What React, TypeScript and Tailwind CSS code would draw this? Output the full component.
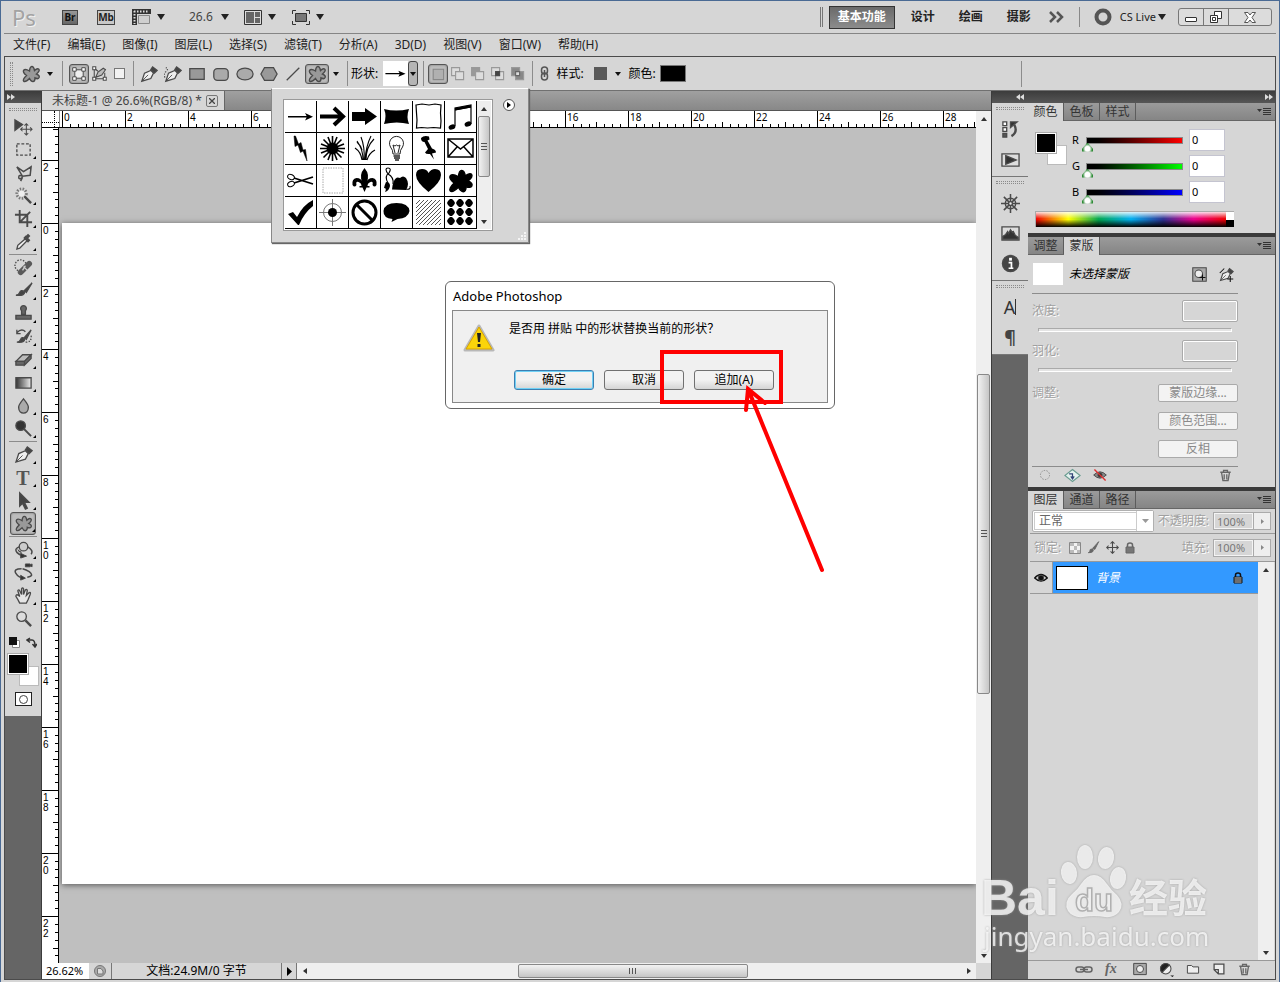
import React, { useState } from 'react';

type IconProps = { children: React.ReactNode; size?: number; className?: string };

// Small line-art icon on a 20x20 grid
function Icon({ children, size = 20, className = '' }: IconProps) {
  return (
    <svg
      width={size}
      height={size}
      viewBox="0 0 20 20"
      fill="none"
      stroke="#4a4a4a"
      strokeWidth="1.4"
      className={`block shrink-0 ${className}`}
      aria-hidden="true"
    >
      {children}
    </svg>
  );
}

function Caret({ className = '' }: { className?: string }) {
  return (
    <svg width="8" height="6" viewBox="0 0 8 6" className={`block shrink-0 ${className}`} aria-hidden="true">
      <path d="M0 0h8L4 6z" fill="#222" />
    </svg>
  );
}

function SmallCaret() {
  return (
    <svg width="6" height="4" viewBox="0 0 6 4" className="block shrink-0" aria-hidden="true">
      <path d="M0 0h6L3 4z" fill="#111" />
    </svg>
  );
}

function Divider({ className = 'w-2' }: { className?: string }) {
  return (
    <div className={`flex shrink-0 justify-center self-stretch py-1 ${className}`}>
      <div className="w-px bg-[#8c8c8c]" />
    </div>
  );
}

function Grip() {
  return <div className="h-[3px] w-7 border-y border-dotted border-[#8a8a8a]" />;
}

const BLOB = 'M8.5 7C9 1 12.5 1 13.5 6.5C17 3 21 5.5 15.5 10C20.5 12 18 16 14 14C14 19 10.5 18.5 8.5 14.5C3 20-.5 17 5.5 11.5C-.5 7 3 3.5 8.5 7Z';

const MENUS = ['文件(F)', '编辑(E)', '图像(I)', '图层(L)', '选择(S)', '滤镜(T)', '分析(A)', '3D(D)', '视图(V)', '窗口(W)', '帮助(H)'];

function TopBar() {
  return (
    <header className="flex h-[33px] shrink-0 items-center border-b border-[#858585]">
      <div className="w-12 pl-2 text-[22px] leading-8 text-[#a3a3a3] [text-shadow:1px_1px_0_#f2f2f2]">Ps</div>
      <button className="flex w-9 justify-center" aria-label="Bridge">
        <span className="h-[15px] w-4 border border-[#444] bg-linear-to-b from-[#999] to-[#666] text-center text-[10px] leading-[13px] font-bold text-[#111]">Br</span>
      </button>
      <button className="flex w-9 justify-center" aria-label="Mini Bridge">
        <span className="h-[15px] w-[18px] border border-[#444] bg-[#c8c8c8] text-center text-[10px] leading-[13px] font-bold text-[#222]">Mb</span>
      </button>
      <button className="flex w-16 items-center gap-1.5 pl-2" aria-label="View extras">
        <svg width="19" height="16" viewBox="0 0 19 16" aria-hidden="true">
          <path d="M0 0h19v5H5v11H0z" fill="#333" />
          <path d="M2 2.5h15M2.5 2v13" stroke="#ddd" strokeWidth="2" strokeDasharray="1.5 1.5" />
          <path d="M6.5 6.5h11v8h-11z" fill="#cfcfcf" stroke="#888" />
        </svg>
        <Caret />
      </button>
      <button className="flex w-14 items-center gap-2 pl-px text-[12px] text-[#444]">
        26.6
        <Caret />
      </button>
      <button className="flex w-12 items-center gap-1.5" aria-label="Arrange documents">
        <svg width="18" height="15" viewBox="0 0 18 15" aria-hidden="true">
          <path d="M.5.5h17v14H.5z" fill="#ddd" stroke="#333" />
          <path d="M2 2h8v11H2zM11 2h5v5h-5zM11 8h5v5h-5z" fill="#666" />
        </svg>
        <Caret />
      </button>
      <button className="flex w-12 items-center gap-1.5" aria-label="Screen mode">
        <svg width="18" height="15" viewBox="0 0 18 15" fill="none" stroke="#333" aria-hidden="true">
          <path d="M.5 4V.5H4M14 .5h3.5V4M17.5 11v3.5H14M4 14.5H.5V11" />
          <path d="M3.5 3.5h11v8h-11z" fill="#777" />
        </svg>
        <Caret />
      </button>

      <div className="ml-auto flex items-center">
        <div className="mr-1.5 h-5 w-[3px] border-x border-[#777]" />
        <button className="mr-4 h-[23px] w-[66px] border border-[#333] bg-linear-to-b from-[#6a6a6a] to-[#8c8c8c] text-[12px] leading-5 font-bold text-white">
          基本功能
        </button>
        <div className="flex gap-6">
          {['设计', '绘画', '摄影'].map((label) => (
            <button key={label} className="w-6 text-[12px] font-bold text-[#222]">
              {label}
            </button>
          ))}
        </div>
        <button className="ml-3 flex w-7 justify-center" aria-label="More workspaces">
          <svg width="15" height="12" viewBox="0 0 15 12" fill="none" stroke="#555" strokeWidth="2.5" aria-hidden="true">
            <path d="M1 1l5 5-5 5M8 1l5 5-5 5" />
          </svg>
        </button>
        <div className="mr-3.5 ml-2 h-5 w-px bg-[#888]" />
        <button className="flex items-center gap-2 text-[11px] text-[#222]">
          <svg width="18" height="18" viewBox="0 0 18 18" aria-hidden="true">
            <circle cx="9" cy="9" r="6.5" fill="none" stroke="#555" strokeWidth="4" />
          </svg>
          CS Live
          <Caret className="-ml-1.5" />
        </button>
        <div className="mr-1 ml-3 flex h-[18px] rounded-[3px] border border-[#777] bg-[#dcdcdc]">
          <button className="flex w-[25px] items-center justify-center border-r border-[#777]" aria-label="Minimize">
            <span className="mt-1 h-[5px] w-3 rounded-[1px] border border-[#333] bg-white" />
          </button>
          <button className="flex w-[25px] items-center justify-center border-r border-[#777]" aria-label="Restore">
            <svg width="12" height="12" viewBox="0 0 12 12" fill="#fff" stroke="#333" aria-hidden="true">
              <path d="M4.5.5h7v7h-7z" />
              <path d="M.5 4.5h7v7h-7z" />
              <path d="M2.5 6.5h3v3h-3z" />
            </svg>
          </button>
          <button className="flex w-[42px] items-center justify-center" aria-label="Close">
            <svg width="12" height="11" viewBox="0 0 12 11" fill="#fff" stroke="#555" aria-hidden="true">
              <path d="M.5.5H4L6 3 8 .5h3.500L8 5.500l3.500 5H8L6 8l-2 2.500H.5L4 5.500z" />
            </svg>
          </button>
        </div>
      </div>
    </header>
  );
}

function Pen() {
  return (
    <>
      <path d="M2 18L5 9L12 6L15 9L12 15Z" fill="#eee" />
      <path d="M2 18L9 11" strokeWidth="1" />
      <path d="M12 5L14 2L19 6L16 9Z" fill="#444" />
    </>
  );
}

function PathOps({ mode }: { mode: number }) {
  const fills = ['#aaa', '#ddd', '#ddd', '#ddd', '#888'];
  return (
    <Icon size={16}>
      {mode === 0 ? (
        <path d="M4 4h13v13H4z" fill="#b0b0b0" stroke="#888" />
      ) : (
        <>
          <path d="M2 2h10v10H2z" fill={mode === 2 ? '#999' : fills[mode]} stroke="#999" />
          <path d="M7 7h10v10H7z" fill={fills[mode]} stroke="#999" />
          {mode === 3 && <path d="M7 7h5v5H7z" fill="#444" />}
          {mode === 4 && <path d="M7 7h5v5H7z" fill="#ddd" stroke="#666" />}
        </>
      )}
    </Icon>
  );
}

const DRAW_TOOLS: { name: string; art: React.ReactNode }[] = [
  { name: 'Pen', art: <Pen /> },
  {
    name: 'Freeform pen',
    art: (
      <>
        <Pen />
        <path d="M1 14Q-1 9 3 7Q5 4 2 3" strokeDasharray="1.5 1.5" />
      </>
    ),
  },
  { name: 'Rectangle', art: <path d="M2 4h16v12H2z" fill="#999" /> },
  { name: 'Rounded rectangle', art: <rect x="2" y="4" width="16" height="13" rx="4" fill="#aaa" /> },
  { name: 'Ellipse', art: <ellipse cx="10" cy="10" rx="9" ry="6.5" fill="#aaa" /> },
  { name: 'Polygon', art: <path d="M1 10L5 3h10l4 7-4 7H5z" fill="#999" /> },
  { name: 'Line', art: <path d="M3 17L17 3" /> },
];

const pressed = 'rounded-[3px] border border-[#555] bg-[#bcbcbc] shadow-[inset_0_0_2px_#666]';

function OptionsBar() {
  return (
    <div className="flex h-[34px] shrink-0 items-center border-b border-[#707070] text-[12px] text-black">
      <div className="flex w-3 justify-center">
        <div className="h-6 w-[3px] border-x border-dotted border-[#8a8a8a]" />
      </div>
      <div className="flex w-7 justify-center">
        <Icon><path d={BLOB} fill="#999" /></Icon>
      </div>
      <div className="flex w-2.5 justify-center"><SmallCaret /></div>
      <Divider className="w-3.5" />
      <button className={`flex h-5 w-5 items-center justify-center ${pressed}`} aria-label="Shape layers">
        <Icon size={14}>
          <path d="M4 4h12v12H4z" fill="#eee" />
          <path d="M1 1h5v5H1zM14 1h5v5h-5zM1 14h5v5H1zM14 14h5v5h-5z" fill="#fff" />
        </Icon>
      </button>
      <button className="flex w-5 justify-center" aria-label="Paths">
        <Icon size={15}>
          <path d="M3 3v14h14M3 3l5 4M17 17V9" />
          <path d="M5 15L8 8L15 3L18 5L13 12Z" fill="#bbb" />
          <path d="M1 1h4v4H1zM1 15h4v4H1zM15 15h4v4h-4z" fill="#fff" />
        </Icon>
      </button>
      <button className="flex w-5 justify-center" aria-label="Fill pixels">
        <span className="h-[11px] w-[11px] border border-[#777] bg-[#f2f2f2]" />
      </button>
      <Divider />
      {DRAW_TOOLS.map((tool) => (
        <button key={tool.name} className="flex w-6 justify-center" aria-label={tool.name}>
          <Icon size={18}>{tool.art}</Icon>
        </button>
      ))}
      <button className={`flex h-5 w-6 items-center justify-center ${pressed}`} aria-label="Custom shape">
        <Icon><path d={BLOB} fill="#999" /></Icon>
      </button>
      <div className="flex w-3.5 justify-center"><SmallCaret /></div>
      <Divider />
      <span className="w-8">形状:</span>
      <button className="flex h-[25px] w-[25px] items-center bg-white" aria-label="Current shape">
        <svg width="25" height="25" viewBox="0 0 31 31" aria-hidden="true">
          <path d="M3 15h20v1.500H3zM19 12l9 3.700-9 3.700 2-3.700z" />
        </svg>
      </button>
      <button className="flex h-[25px] w-2.5 items-center justify-center rounded-[3px] border border-[#444] bg-[#b5b5b5]" aria-label="Choose shape">
        <SmallCaret />
      </button>
      <Divider className="w-2.5" />
      {['New', 'Add', 'Subtract', 'Intersect', 'Exclude'].map((name, i) => (
        <button
          key={name}
          aria-label={name}
          className={`flex h-5 w-5 items-center justify-center ${i === 0 ? pressed : ''}`}
        >
          <PathOps mode={i} />
        </button>
      ))}
      <Divider />
      <button className="flex w-4 justify-center" aria-label="Link style">
        <svg width="9" height="15" viewBox="0 0 9 15" fill="none" stroke="#555" strokeWidth="1.5" aria-hidden="true">
          <rect x="1.5" y="1" width="6" height="7" rx="3" />
          <rect x="1.5" y="7" width="6" height="7" rx="3" />
          <path d="M4.5 4v7" />
        </svg>
      </button>
      <span className="w-9 text-center">样式:</span>
      <div className="flex w-6 justify-center"><span className="h-[13px] w-[13px] bg-[#595959]" /></div>
      <div className="flex w-3 justify-center"><SmallCaret /></div>
      <span className="w-9 text-center">颜色:</span>
      <button className="h-[17px] w-[26px] border border-[#777] bg-black" aria-label="Shape colour" />
      <div className="mr-[253px] ml-auto h-[26px] w-px bg-[#8c8c8c]" />
    </div>
  );
}

const TOOL_GROUPS: { name: string; art: React.ReactNode }[][] = [
  [
    {
      name: 'Move',
      art: (
        <>
          <path d="M1 3v11l8-6z" fill="#444" />
          <path d="M13 7v12M7 13h12M11 9l2-2 2 2M11 17l2 2 2-2M9 11l-2 2 2 2M17 11l2 2-2 2" strokeWidth="1.1" />
        </>
      ),
    },
    { name: 'Marquee', art: <path d="M3 4h14v12H3z" strokeDasharray="3 1.8" /> },
    { name: 'Lasso', art: <path d="M3 4l7 5 8-5-1 9-8 1-6-10M9 14q-4-2-4 1t4 0l-2 4" strokeWidth="1.600" /> },
    {
      name: 'Magic wand',
      art: (
        <>
          <circle cx="8" cy="8" r="5" stroke="#777" strokeWidth="3" strokeDasharray="1.5 1.5" />
          <circle cx="8" cy="8" r="3" fill="#eee" stroke="none" />
          <path d="M11 11l7 7" strokeWidth="2.5" />
        </>
      ),
    },
    { name: 'Crop', art: <path d="M6 1v13h13M1 6h13v13M6 14L17 3" strokeWidth="2" /> },
    {
      name: 'Eyedropper',
      art: (
        <>
          <path d="M3 18l1-4 8-7 2 2-8 8z" fill="#eee" />
          <path d="M11 5l5 5M13 6l3-3" strokeWidth="3.5" />
        </>
      ),
    },
  ],
  [
    {
      name: 'Healing brush',
      art: (
        <>
          <circle cx="7" cy="8" r="6" strokeDasharray="1.5 1.5" />
          <path d="M7 15L16 6" strokeWidth="6" strokeLinecap="round" stroke="#5a5a5a" />
          <path d="M10 9l4 4M12 8l-3 5" stroke="#ccc" />
        </>
      ),
    },
    { name: 'Brush', art: <path d="M2 15q3 0 4-3t5-1q1 5-9 4zM11 10l8-8-6 10z" fill="#444" /> },
    { name: 'Clone stamp', art: <path d="M2 12h16v4H2zM8 11V7a3 3 0 1 1 4 0v4z" fill="#666" /> },
    {
      name: 'History brush',
      art: (
        <>
          <path d="M3 16q3 0 4-3t4-1q1 5-8 4zM11 11l7-8-5 10z" fill="#444" />
          <path d="M3 6q5-5 9-1M3 3v4h4" />
          <path d="M18 9q1 7-6 7" strokeDasharray="1.5 1.5" />
        </>
      ),
    },
    {
      name: 'Eraser',
      art: (
        <>
          <path d="M2 12L9 5h9l-7 7z" fill="#bbb" />
          <path d="M2 12h9v4H2zM11 12l7-7v4l-7 7z" fill="#666" />
        </>
      ),
    },
    {
      name: 'Gradient',
      art: (
        <>
          <defs>
            <linearGradient id="tool-gradient">
              <stop stopColor="#333" />
              <stop offset="1" stopColor="#eee" />
            </linearGradient>
          </defs>
          <path d="M2 5h16v11H2z" fill="url(#tool-gradient)" />
        </>
      ),
    },
    { name: 'Blur', art: <path d="M10 3q6 7 5 10a5 5 0 0 1-10 0q-1-3 5-10z" fill="#aaa" /> },
    {
      name: 'Dodge',
      art: (
        <>
          <circle cx="7" cy="7" r="5" fill="#333" />
          <path d="M10 10l8 8" strokeWidth="2" />
        </>
      ),
    },
  ],
  [
    { name: 'Pen tool', art: <Pen /> },
    { name: 'Type', art: null },
    { name: 'Path selection', art: <path d="M6 2v14l3-3 3 6 2-1-3-6h5z" fill="#444" /> },
    { name: 'Custom shape tool', art: <path d={BLOB} fill="#999" /> },
  ],
  [
    {
      name: '3D rotate',
      art: (
        <>
          <path d="M6 7Q0 9 3 13q4 4 10 4M14 7q7 4 4 8" strokeWidth="1.600" />
          <circle cx="10" cy="7" r="4.5" fill="#ccc" />
          <path d="M8 13q-3 0-4-3M7 14l6 3-6 2z" fill="#333" strokeWidth="1" />
        </>
      ),
    },
    {
      name: '3D camera',
      art: (
        <>
          <path d="M8 6Q-1 6 2 11t9 5M14 15q8-1 2-6-3-2-7-3" strokeWidth="1.600" />
          <path d="M12 1h5v3h-5zM17 2l2-1v3l-2-1M7 13l5 3-5 2z" fill="#333" strokeWidth="1" />
        </>
      ),
    },
    {
      name: 'Hand',
      art: <path d="M6 18Q4 14 2 11q0-3 3-1l1 1L4 5q1-2 2 0l2 4V3q1-2 2 0v6l2-5q2-1 2 1l-1 5 3-3q2-1 1 2l-2 5-2 4z" fill="#e5e5e5" />,
    },
    {
      name: 'Zoom',
      art: (
        <>
          <circle cx="8" cy="8" r="5" fill="#ddd" />
          <path d="M12 12l6 6" strokeWidth="2.5" />
        </>
      ),
    },
  ],
];

function Toolbar() {
  return (
    <aside className="w-[37px] shrink-0 border-r border-[#3c3c3c] bg-[#656565]">
      <div className="flex h-3 items-center bg-linear-to-b from-[#3c3c3c] to-[#565656] pl-0.5">
        <Chevrons direction="right" />
      </div>
      <div className="flex flex-col items-center bg-[#d6d6d6] pb-2.5">
        <div className="flex h-3 items-center"><Grip /></div>
        {TOOL_GROUPS.map((group, i) => (
          <React.Fragment key={i}>
            {i > 0 && <div className="my-px h-px w-7 bg-[#8c8c8c]" />}
            {group.map((tool) => {
              const active = tool.name === 'Custom shape tool';
              return (
                <button
                  key={tool.name}
                  aria-label={tool.name}
                  className={`relative flex h-[23px] w-[26px] items-center justify-center ${active ? pressed : ''}`}
                >
                  {tool.art ? (
                    <Icon size={19}>{tool.art}</Icon>
                  ) : (
                    <span className="font-['Liberation_Serif',serif] text-[20px] leading-5 font-bold text-[#555]">T</span>
                  )}
                  {tool.name !== 'Move' && tool.name !== 'Zoom' && (
                    <span className="absolute right-0 bottom-0.5 h-[3px] w-[3px] bg-black [clip-path:polygon(100%_0,100%_100%,0_100%)]" />
                  )}
                </button>
              );
            })}
          </React.Fragment>
        ))}
        <div className="flex h-6 w-7 items-center justify-between">
          <svg width="11" height="11" viewBox="0 0 11 11" aria-hidden="true">
            <path d="M3.5 3.5h7v7h-7z" fill="#fff" stroke="#888" />
            <path d="M0 0h8v8H0z" fill="#111" />
          </svg>
          <svg width="11" height="11" viewBox="0 0 11 11" fill="none" stroke="#333" strokeWidth="1.5" aria-hidden="true">
            <path d="M4 1L1 3l3 2.500M1 3h5q3 0 3 6M6.500 7L9 10l2-3" />
          </svg>
        </div>
        <Swatches />
        <button className="mt-1.5 flex h-[14px] w-[17px] items-center justify-center border border-[#222] bg-white" aria-label="Quick mask">
          <span className="h-[9px] w-[9px] rounded-full border border-[#444]" />
        </button>
      </div>
    </aside>
  );
}

function Swatches() {
  return (
    <div className="relative h-8 w-[31px]">
      <button className="absolute right-0 bottom-0 h-5 w-5 border border-[#bbb] bg-white" aria-label="Background colour" />
      <button className="absolute top-0 left-0 h-5 w-5 border border-white bg-black outline outline-[#aaa]" aria-label="Foreground colour" />
    </div>
  );
}

function Chevrons({ direction }: { direction: 'left' | 'right' }) {
  return (
    <svg width="8" height="6" viewBox="0 0 8 6" fill="#ddd" className={direction === 'left' ? 'rotate-180' : ''} aria-hidden="true">
      <path d="M0 0l4 3-4 3zM4 0l4 3-4 3z" />
    </svg>
  );
}

function HorizontalRuler() {
  const unit = 62.9;
  return (
    <svg className="block h-full w-full" fontSize="10" aria-hidden="true">
      {Array.from({ length: 15 }, (_, major) => (
        <g key={major} transform={`translate(${Math.round(2 + major * unit)} 0)`} stroke="#000">
          <path d="M.5 0v17" />
          {[1, 2, 3, 4, 5, 6, 7].map((t) => (
            <path key={t} d={`M${Math.round((t * unit) / 8) + 0.5} ${t === 4 ? 11 : 13}v6`} />
          ))}
          <text x="2" y="10" stroke="none">{major * 2}</text>
        </g>
      ))}
    </svg>
  );
}

function VerticalRuler() {
  const labels = ['', '2', '0', '2', '4', '6', '8', '10', '12', '14', '16', '18', '20', '22'];
  return (
    <svg className="block h-full w-full font-['Liberation_Sans',sans-serif]" fontSize="10" aria-hidden="true">
      {labels.map((label, i) => (
        <g key={i} transform={`translate(0 ${i * 63 - 31})`} stroke="#000">
          <path d="M0 .5h17" />
          {[1, 2, 3, 4, 5, 6, 7].map((t) => (
            <path key={t} d={`M${t === 4 ? 11 : 13} ${Math.round((t * 63) / 8) + 0.5}h6`} />
          ))}
          {label.split('').map((digit, d) => (
            <text key={d} x="1" y={11 + d * 10} stroke="none">{digit}</text>
          ))}
        </g>
      ))}
    </svg>
  );
}

function ScrollArrow({ rotate = '' }: { rotate?: string }) {
  return (
    <span className="flex h-[15px] w-[15px] shrink-0 items-center justify-center">
      <svg width="6" height="4" viewBox="0 0 6 4" className={rotate} aria-hidden="true">
        <path d="M0 4L3 0l3 4z" fill="#333" />
      </svg>
    </span>
  );
}

function DocumentArea() {
  return (
    <main className="flex min-w-0 flex-1 flex-col bg-[#bfbfbf]">
      <div className="flex h-5 shrink-0 items-end border-b border-[#555] bg-linear-to-b from-[#a0a0a0] to-[#888]">
        <div className="flex h-[19px] items-center gap-1 border-r border-[#666] bg-[#d6d6d6] pr-1.5 pl-2.5 text-[12px] whitespace-nowrap text-[#444]">
          未标题-1 @ 26.6%(RGB/8) *
          <button className="flex h-3 w-3 items-center justify-center rounded-[2px] border border-[#777]" aria-label="Close document">
            <svg width="6" height="6" viewBox="0 0 6 6" stroke="#444" strokeWidth="1.300" aria-hidden="true">
              <path d="M0 0l6 6M6 0L0 6" />
            </svg>
          </button>
        </div>
      </div>
      <div className="flex min-h-0 flex-1">
        <div className="flex min-w-0 flex-1 flex-col">
          <div className="flex h-[17px] shrink-0 border-b border-black bg-white">
            <div className="relative w-[18px] shrink-0 border-r border-[#888]">
              <div className="absolute top-0 right-1 h-full border-r border-dotted border-black" />
              <div className="absolute bottom-1 left-0 w-full border-b border-dotted border-black" />
            </div>
            <div className="min-w-0 flex-1 overflow-hidden"><HorizontalRuler /></div>
          </div>
          <div className="flex min-h-0 flex-1">
            <div className="w-[17px] shrink-0 overflow-hidden border-r border-black bg-white"><VerticalRuler /></div>
            <div className="min-w-0 flex-1 overflow-hidden pt-[95px] pb-[79px] pl-[3px]">
              <div className="h-full bg-white shadow-[0_1px_6px_#555]" />
            </div>
          </div>
        </div>
        <div className="flex w-[15px] shrink-0 flex-col bg-[#efefef]">
          <ScrollArrow />
          <div className="grow-[248] basis-0" />
          <div className="mx-px flex grow-[318] basis-0 items-center justify-center rounded-[2px] border border-[#888] bg-linear-to-r from-[#f2f2f2] to-[#c6c6c6]">
            <span className="h-2 w-1.5 bg-[repeating-linear-gradient(#555_0_1px,transparent_1px_3px)]" />
          </div>
          <div className="grow-[254] basis-0" />
          <ScrollArrow rotate="rotate-180" />
        </div>
      </div>
      <div className="flex h-4 shrink-0 bg-[#d6d6d6] text-[11px] leading-4 text-black">
        <div className="w-[47px] bg-white pl-1">26.62%</div>
        <div className="flex w-[23px] items-center justify-center border-r border-[#777]">
          <svg width="12" height="12" viewBox="0 0 12 12" fill="none" stroke="#777" aria-hidden="true">
            <circle cx="6" cy="6" r="5.500" fill="#aaa" />
            <path d="M3.500 3.500H7l2 2.500v3H3.500z" fill="#ddd" />
          </svg>
        </div>
        <div className="w-[170px] border-r border-[#777] text-center text-[12px]">文档:24.9M/0 字节</div>
        <div className="flex w-[15px] items-center justify-center border-r border-[#777]">
          <svg width="5" height="9" viewBox="0 0 5 9" aria-hidden="true"><path d="M0 0l5 4.500L0 9z" /></svg>
        </div>
        <div className="flex flex-1 bg-[#efefef]">
          <ScrollArrow rotate="-rotate-90" />
          <div className="grow-[207] basis-0" />
          <div className="my-px flex grow-[228] basis-0 items-center justify-center rounded-[2px] border border-[#888] bg-linear-to-b from-[#f2f2f2] to-[#c6c6c6]">
            <span className="h-1.5 w-2 bg-[repeating-linear-gradient(90deg,#555_0_1px,transparent_1px_3px)]" />
          </div>
          <div className="grow-[214] basis-0" />
          <ScrollArrow rotate="rotate-90" />
        </div>
        <div className="w-[15px]" />
      </div>
    </main>
  );
}

const DOCK_GROUPS: { name: string; art: React.ReactNode }[][] = [
  [
    {
      name: 'History',
      art: (
        <>
          <path d="M2 2h4v4H2zM2 8h4v4H2z" fill="#fff" />
          <path d="M2 14h4v4H2z" fill="#555" />
          <path d="M11 17q7-4 3-12" strokeWidth="2.500" />
          <path d="M10 8V2h7z" fill="#333" />
        </>
      ),
    },
    {
      name: 'Actions',
      art: (
        <>
          <path d="M1 4h18v13H1z" fill="#ddd" />
          <path d="M5 6l11 4.500L5 15z" fill="#333" />
        </>
      ),
    },
  ],
  [
    {
      name: 'Navigator',
      art: (
        <>
          <circle cx="10" cy="10" r="5.500" />
          <path d="M10 0v20M0 10h20M3 3l14 14M17 3L3 17" strokeWidth="1.600" />
          <circle cx="10" cy="10" r="2" fill="#eee" />
        </>
      ),
    },
    {
      name: 'Histogram',
      art: (
        <>
          <path d="M1 3h18v14H1z" fill="#ddd" />
          <path d="M2 16v-3l3-2 2-3 1 2 2-4 2 3 1-1 2 4 3 2v2z" fill="#333" />
        </>
      ),
    },
    {
      name: 'Info',
      art: (
        <>
          <circle cx="10" cy="10" r="8.500" fill="#444" />
          <path d="M10 4v3" stroke="#fff" strokeWidth="3" />
          <path d="M8 9h3v6M8 15h5" stroke="#fff" strokeWidth="1.800" />
        </>
      ),
    },
  ],
  [
    { name: 'Character', art: null },
    { name: 'Paragraph', art: null },
  ],
];

function IconDock() {
  return (
    <div className="w-9 shrink-0 bg-[#656565]">
      {DOCK_GROUPS.map((group, i) => (
        <div key={i} className="flex flex-col items-center border-b border-[#777] bg-[#d6d6d6] pb-0.5">
          <div className="flex h-[11px] items-center"><Grip /></div>
          {group.map((item) => (
            <button key={item.name} aria-label={item.name} className="flex h-[30px] items-center justify-center">
              {item.art ? (
                <Icon size={19}>{item.art}</Icon>
              ) : item.name === 'Character' ? (
                <span className="border-r border-[#333] text-[18px] leading-4 text-[#333]">A</span>
              ) : (
                <span className="text-[18px] leading-4 font-bold text-[#444]">¶</span>
              )}
            </button>
          ))}
        </div>
      ))}
    </div>
  );
}

function TabStrip({ tabs, active }: { tabs: string[]; active: string }) {
  return (
    <div role="tablist" className="flex h-[18px] shrink-0 items-stretch border-b border-[#666] bg-linear-to-b from-[#9b9b9b] to-[#858585]">
      {tabs.map((tab) => (
        <button
          key={tab}
          role="tab"
          aria-selected={tab === active}
          className={`w-9 border-r border-[#5c5c5c] text-[12px] leading-4 ${
            tab === active ? '-mb-px bg-[#d6d6d6] text-[#333]' : 'text-[#333]'
          }`}
        >
          {tab}
        </button>
      ))}
      <button className="mr-1 ml-auto" aria-label="Panel menu">
        <svg width="14" height="8" viewBox="0 0 14 8" aria-hidden="true">
          <path d="M0 1h5L2.500 4z" fill="#333" />
          <path d="M6 .5h8M6 2.500h8M6 4.500h8M6 6.500h8" stroke="#333" />
        </svg>
      </button>
    </div>
  );
}

const CHANNELS = [
  { name: 'R', track: '[&::-webkit-slider-runnable-track]:to-[#f00]' },
  { name: 'G', track: '[&::-webkit-slider-runnable-track]:to-[#0f0]' },
  { name: 'B', track: '[&::-webkit-slider-runnable-track]:to-[#00f]' },
];

function ColorPanel() {
  const [values, setValues] = useState<Record<string, number>>({ R: 0, G: 0, B: 0 });
  return (
    <section className="border-b-4 border-[#3a3a3a] bg-[#d6d6d6]">
      <TabStrip tabs={['颜色', '色板', '样式']} active="颜色" />
      <div className="flex pt-1.5 pl-2">
        <div className="w-9 pt-1.5"><Swatches /></div>
        <div>
          {CHANNELS.map(({ name, track }) => (
            <div key={name} className="flex h-[26px] items-center text-[11px]">
              <label htmlFor={`slider-${name}`} className="w-[14px]">{name}</label>
              <input
                id={`slider-${name}`}
                type="range"
                max={255}
                value={values[name]}
                onChange={(e) => setValues({ ...values, [name]: Number(e.target.value) })}
                className={`h-4 w-[97px] appearance-none [&::-webkit-slider-runnable-track]:h-[7px] [&::-webkit-slider-runnable-track]:border [&::-webkit-slider-runnable-track]:border-[#888] [&::-webkit-slider-runnable-track]:bg-linear-to-r [&::-webkit-slider-runnable-track]:from-black [&::-webkit-slider-thumb]:mt-[5px] [&::-webkit-slider-thumb]:-ml-[5px] [&::-webkit-slider-thumb]:h-[9px] [&::-webkit-slider-thumb]:w-[11px] [&::-webkit-slider-thumb]:appearance-none [&::-webkit-slider-thumb]:bg-[radial-gradient(ellipse_at_50%_65%,#fff_30%,#2e8b36_62%)] [&::-webkit-slider-thumb]:[clip-path:polygon(50%_0,100%_70%,100%_100%,0_100%,0_70%)] ${track}`}
              />
              <input
                aria-label={`${name} value`}
                value={values[name]}
                onChange={(e) => setValues({ ...values, [name]: Number(e.target.value) || 0 })}
                className="ml-1.5 h-[22px] w-9 border border-[#c4c4d0] bg-white px-0.5 pb-0.5 outline-none"
              />
            </div>
          ))}
        </div>
      </div>
      <div className="mt-1.5 mb-1.5 ml-[7px] flex h-4 w-[199px] border-t border-l border-[#aaa]">
        <div className="flex-1 bg-[linear-gradient(#fffd,transparent_45%,transparent_50%,#000),linear-gradient(90deg,#e00,#ff0_17%,#00a650_33%,#00aeef_50%,#2e3192_67%,#ec008c_83%,#e00)]" />
        <div className="w-2 bg-linear-to-b from-white from-50% to-black to-50%" />
      </div>
    </section>
  );
}

const disabledText = 'text-[#a0a0a0] [text-shadow:1px_1px_0_#fff]';

function MaskPanel() {
  return (
    <section className="border-b-4 border-[#3a3a3a] bg-[#d6d6d6] text-[12px]">
      <TabStrip tabs={['调整', '蒙版']} active="蒙版" />
      <div className="ml-1 w-[206px]">
        <div className="flex h-[39px] items-center border-b border-[#8c8c8c]">
          <div className="ml-px h-[22px] w-[30px] bg-white" />
          <span className="ml-1.5 text-black italic">未选择蒙版</span>
          <button className="mr-3 ml-auto" aria-label="Add pixel mask">
            <Icon size={15}>
              <path d="M1 1h18v18H1z" fill="#aaa" />
              <circle cx="9" cy="9" r="5" fill="#eee" />
              <path d="M14 10v8M10 14h8" stroke="#111" />
            </Icon>
          </button>
          <button className="mr-1" aria-label="Add vector mask">
            <Icon size={15}>
              <Pen />
              <path d="M1 8l6-6M15 12v8M11 16h8" stroke="#111" />
            </Icon>
          </button>
        </div>
        {['浓度:', '羽化:'].map((label) => (
          <div key={label} className="h-10 pt-1.5">
            <div className="flex h-[22px] items-center justify-between">
              <label htmlFor={`mask-${label}`} className={disabledText}>{label}</label>
              <input id={`mask-${label}`} disabled className="h-[22px] w-14 rounded-[2px] border border-[#aaa] bg-[#d6d6d6] shadow-[inset_0_0_0_1px_#fff]" />
            </div>
            <div className="mx-1.5 mt-1.5 h-1 border border-[#aaa] border-r-white border-b-white bg-[#e4e4e4]" />
          </div>
        ))}
        <div className="flex items-start justify-between border-b border-[#8c8c8c] pt-2.5 pb-2">
          <span className={disabledText}>调整:</span>
          <div className="flex flex-col gap-2.5">
            {['蒙版边缘...', '颜色范围...', '反相'].map((label) => (
              <button key={label} disabled className="h-[18px] w-20 rounded-[2px] border border-[#aaa] bg-[#f3f3f3] text-[12px] leading-4 text-[#8a8a8a]">
                {label}
              </button>
            ))}
          </div>
        </div>
        <div className="flex h-5 items-center gap-3 pb-1 pl-1.5">
          <Icon size={14}><circle cx="10" cy="10" r="6.500" stroke="#888" strokeDasharray="2 2" /></Icon>
          <Icon size={17}>
            <path d="M10 3l9 7-9 7-9-7z" fill="#e4f2ee" stroke="#6a9c90" />
            <path d="M6 8h4v5M8 11l2 3 2-3" stroke="#347" />
          </Icon>
          <Icon size={14}>
            <path d="M1 10q9-9 18 0-9 9-18 0z" fill="#888" />
            <circle cx="10" cy="10" r="3" fill="#222" />
            <path d="M2 2l16 16" stroke="#e03030" strokeWidth="2" />
          </Icon>
          <div className="mr-1.5 ml-auto"><TrashIcon /></div>
        </div>
      </div>
    </section>
  );
}

function TrashIcon() {
  return (
    <Icon size={13}>
      <path d="M2 5h16M7 4V2h6v2M4 6l2 12h8l2-12M8 8v8M12 8v8" strokeWidth="2" stroke="#666" />
    </Icon>
  );
}

function LockIcon({ color }: { color: string }) {
  return (
    <svg width="10" height="12" viewBox="0 0 10 12" fill="none" stroke={color} aria-hidden="true">
      <path d="M2.500 5V3q0-2 2.500-2t2.500 2v2" strokeWidth="1.500" />
      <path d="M1 5h8v6H1zM1 7h8M1 9h8" fill="#ccc" />
    </svg>
  );
}

function PercentField({ label, id }: { label: string; id: string }) {
  return (
    <div className="ml-auto flex items-center">
      <label htmlFor={id} className={`mr-1 ${disabledText}`}>{label}</label>
      <input
        id={id}
        disabled
        value="100%"
        readOnly
        className="h-[18px] w-[41px] border border-[#aaa] bg-[#d6d6d6] px-[3px] text-[11px] leading-4 text-[#777] shadow-[inset_0_0_0_1px_#f4f4f4]"
      />
      <button disabled className="flex h-[18px] w-[17px] items-center justify-center border border-l-0 border-[#aaa] bg-[#eee]" aria-label={`${label} slider`}>
        <svg width="3" height="5" viewBox="0 0 3 5" aria-hidden="true"><path d="M0 0l3 2.500L0 5z" fill="#888" /></svg>
      </button>
    </div>
  );
}

function LayersPanel() {
  return (
    <section className="flex min-h-0 flex-1 flex-col bg-[#d6d6d6] text-[12px]">
      <TabStrip tabs={['图层', '通道', '路径']} active="图层" />
      <div className="ml-0.5 flex h-[25px] items-center border-b border-[#999] pr-1 pl-0.5">
        <div className="relative">
          <select
            aria-label="混合模式"
            className="h-[22px] w-[122px] appearance-none rounded-[2px] border border-[#b0b0b0] bg-white px-1.5 text-[12px] leading-5 text-[#666] shadow-[inset_0_0_0_1px_#fff,inset_0_0_0_2px_#ccc]"
          >
            <option>正常</option>
          </select>
          <span className="pointer-events-none absolute inset-y-px right-px flex w-[17px] items-center justify-center border-l border-[#ccc] bg-white">
            <svg width="7" height="4" viewBox="0 0 7 4" aria-hidden="true"><path d="M0 0h7L3.500 4z" fill="#999" /></svg>
          </span>
        </div>
        <PercentField label="不透明度:" id="opacity" />
      </div>
      <div className="ml-0.5 flex h-7 items-center border-b border-[#999] pr-1 pl-1">
        <span className={`mr-2 ${disabledText}`}>锁定:</span>
        <div className="flex items-center gap-1.5">
          <svg width="12" height="12" viewBox="0 0 12 12" aria-hidden="true">
            <path d="M.5.5h11v11H.5z" fill="#f2f2f2" stroke="#888" />
            <path d="M1 1h4v3H1zM8 1h3v3H8zM5 4h3v4H5zM1 8h4v3H1zM8 8h3v3H8z" fill="#bbb" />
          </svg>
          <Icon size={13}><path d="M2 18q3-1 3-5l4-1q3 6-7 6zM9 11l9-10-6 12z" fill="#666" stroke="#666" /></Icon>
          <Icon size={13}><path d="M10 1v18M1 10h18M7 4l3-3 3 3M7 16l3 3 3-3M4 7l-3 3 3 3M16 7l3 3-3 3" strokeWidth="1.600" /></Icon>
          <svg width="10" height="12" viewBox="0 0 10 12" fill="none" stroke="#666" aria-hidden="true">
            <path d="M2.500 5V3q0-2 2.500-2t2.500 2v2" strokeWidth="1.500" />
            <path d="M1 5h8v6H1z" fill="#777" />
          </svg>
        </div>
        <PercentField label="填充:" id="fill" />
      </div>
      <div className="flex min-h-0 flex-1 border-b border-[#999] pl-0.5">
        <div className="flex-1">
          <div className="flex h-8 border-b border-[#999]">
            <button className="flex w-[23px] shrink-0 items-center justify-center border-r border-[#999]" aria-label="Toggle visibility">
              <Icon size={14}>
                <path d="M1 10q9-10 18 0-9 9-18 0z" fill="#ddd" stroke="#111" strokeWidth="2" />
                <circle cx="10" cy="10" r="4" fill="#111" />
              </Icon>
            </button>
            <div className="flex flex-1 items-center bg-[#3399ff] px-[3px] text-white">
              <div className="h-6 w-8 border border-black bg-white" />
              <span className="ml-2 flex-1 italic">背景</span>
              <div className="mr-3"><LockIcon color="#111" /></div>
            </div>
          </div>
        </div>
        <div className="mr-px flex w-4 flex-col items-center justify-between bg-[#efefef]">
          <ScrollArrow />
          <ScrollArrow rotate="rotate-180" />
        </div>
      </div>
      <div className="flex h-[18px] shrink-0 items-center justify-end gap-3 pr-6 pb-0.5">
        <svg width="18" height="9" viewBox="0 0 18 9" fill="none" stroke="#666" strokeWidth="1.500" aria-hidden="true">
          <rect x="1" y="2" width="8" height="5" rx="2.500" />
          <rect x="9" y="2" width="8" height="5" rx="2.500" />
          <path d="M5 4.500h8" />
        </svg>
        <span className="w-4 font-['Liberation_Serif',serif] text-[14px] leading-4 font-bold text-[#666] italic">fx</span>
        <Icon size={14}>
          <path d="M1 2h18v16H1z" fill="#aaa" />
          <circle cx="10" cy="10" r="5" fill="#eee" />
        </Icon>
        <Icon size={15}>
          <circle cx="9" cy="9" r="7" fill="#eee" />
          <path d="M4 14A7 7 0 0 1 14 4z" fill="#222" />
          <path d="M15 18h5l-2 2z" fill="#111" stroke="none" />
        </Icon>
        <Icon size={14}><path d="M2 5h6l2 2h8v9H2z" fill="#eee" /></Icon>
        <Icon size={14}><path d="M3 3h14v14H9l-6-6zM3 11h6v6" fill="#eee" strokeWidth="1.800" /></Icon>
        <TrashIcon />
      </div>
    </section>
  );
}

const SHAPES: React.ReactNode[] = [
  <path d="M3 15h21v1.500H3zM20 12l8 3.700-8 3.700 2-3.700z" />,
  <path d="M3 15.500h23M17 7l9 8.500-9 8.500" fill="none" stroke="#000" strokeWidth="4" />,
  <path d="M3 11h13V7l12 8.500L16 24v-4H3z" />,
  <path d="M3 8q12 3 25 0-3 8 0 15-12-3-25 0 3-8 0-15z" />,
  <path d="M3 4l6-1 7 1 6-1 6 1-.5 8 .5 8-.5 7-7-.5-6 .5-6-.5-5 .5.500-8-.5-7z" fill="none" stroke="#000" strokeWidth="1.200" />,
  <g>
    <path d="M10 25V7l16-3v19M10 9l16-3" fill="none" stroke="#000" strokeWidth="1.200" />
    <path d="M10 7l16-3v2.500L10 9.500z" />
    <ellipse cx="7" cy="26" rx="3.500" ry="2.500" transform="rotate(-20 7 26)" />
    <ellipse cx="23" cy="23" rx="3.500" ry="2.500" transform="rotate(-20 23 23)" />
  </g>,
  <path d="M9 3h1.500l3 8 2.500-1.500 2 7.500 2.500-.5L22 28l-4-10-2.500 1.500-2.500-7.500-3 1.500z" stroke="#000" strokeWidth=".5" />,
  <g>
    <circle cx="15.500" cy="15.500" r="6" />
    <path d="M15.500 3v25M3 15.500h25M6.500 6.500l18 18M24.500 6.500l-18 18M11 4l9 23M20 4l-9 23M4 11l23 9M27 11L4 20" stroke="#000" strokeWidth="1.600" />
  </g>,
  <path d="M8 8q6 8 6 19M12 4q4 10 3 23M25 6q-8 8-8 21M22 3q-5 10-6 24M6 15q6 4 7 12M26 17q-6 3-8 10M8 9q4 4 5 8" fill="none" stroke="#000" strokeWidth="1.100" />,
  <g fill="none" stroke="#222">
    <path d="M12 21q0-4-2.500-7a7 7 0 1 1 12 0Q19 17 19 21zM14 20l-2-8 2 1 1.500-1 1.500 1 2-1-2 8" />
    <path d="M12.500 23h6.500M13 25h6M14 27h4" strokeWidth="1.500" />
  </g>,
  <path d="M8 5q3-3 8-1.500l.5 3-2 1 4.500 8q4 1 4 4l-4 1 2 6-4-5.500q-4 .5-5-1.500l3-3.500-3.500-7Q8 9 8 5z" />,
  <path d="M3 6h25v18H3zM3 6l12.500 10L28 6M3 24l9-10M28 24l-9-10" fill="none" stroke="#000" strokeWidth="1.500" />,
  <g fill="none" stroke="#000">
    <ellipse cx="6" cy="12" rx="3.500" ry="2.500" transform="rotate(25 6 12)" />
    <ellipse cx="6" cy="19" rx="3.500" ry="2.500" transform="rotate(-25 6 19)" />
    <path d="M9 13l19 6M9 18l19-6" strokeWidth="1.800" />
  </g>,
  <path d="M6 3h20v25H6z" fill="none" stroke="#aaa" strokeDasharray="1.500 1" />,
  <path d="M15.500 3q6 7 2 15 1-5 6-5 5 1 4 7-2 3-4 0 1-4-2-3-3 1-3 4h2v1.500h-3l-2 4.500-2-4.500h-3V21h2q0-3-3-4-3-1-2 3-2 3-4 0-1-6 4-7 5 0 6 5-4-8 2-15z" />,
  <g>
    <path d="M13 16q2-5 6-3 3-3 6 0 4 6 0 12l-14-.5q0-4 2-8.500z" />
    <path d="M5 17q4 0 4 4-1 5-5 6 2-4-1-4 1-4 2-6z" />
    <path d="M7 18Q3 11 8 8q3-5-1-5t0 6q6 3 5 10M25 24q5 1 4-3" fill="none" stroke="#000" strokeWidth="1.100" />
  </g>,
  <path d="M15.500 27Q3 17 3 10 3 4 9 4q5 0 6.500 4Q18 4 22 4q6 0 6 6 0 7-12.500 17z" />,
  <path transform="translate(1.500 2) scale(1.400)" d={BLOB} stroke="#000" />,
  <path d="M3 17l5-2 4 5Q18 8 28 3v6Q19 16 14 28h-1z" />,
  <g fill="none" stroke="#777">
    <circle cx="15.500" cy="15.500" r="9" />
    <path d="M15.500 2v27M2 15.500h27" />
    <circle cx="15.500" cy="15.500" r="4.500" fill="#000" stroke="none" />
  </g>,
  <g fill="none" stroke="#000" strokeWidth="3">
    <circle cx="15.500" cy="15.500" r="11.500" />
    <path d="M7.500 7.500l16 16" />
  </g>,
  <path d="M15.500 6q12 0 13 8-1 7-12 8l-6 3 1-3Q2 21 2.500 14q1-8 13-8z" />,
  <path d="M3 7l4-4M3 11l8-8M3 15L15 3M3 19L19 3M3 23L23 3M3 27L27 3M6 28L28 6M10 28l18-18M14 28l14-14M18 28l10-10M22 28l6-6M26 28l2-2" stroke="#555" />,
  <g>
    {[6, 15, 24].map((y) => [6, 15, 24].map((x) => (
      <path key={`${x}-${y}`} d={`M${x - 4} ${y}l1-2 2-2h2l2 2 1 2-1 2-2 2h-2l-2-2z`} />
    )))}
  </g>,
];

function ShapePicker() {
  return (
    <div className="absolute top-[87px] left-[270px] flex h-[155px] w-[258px] items-start border border-[#888] border-t-white bg-[#d6d6d6] pt-2.5 pl-[11px] shadow-[1px_1px_1px_#666]">
      <div className="flex border border-[#999] bg-white p-px">
        <div className="grid grid-cols-6 gap-px border-r border-b border-black bg-black">
          {SHAPES.map((shape, i) => (
            <button key={i} aria-label={`Shape ${i + 1}`} className="h-[31px] w-[31px] bg-white">
              <svg width="31" height="31" viewBox="0 0 31 31" aria-hidden="true">{shape}</svg>
            </button>
          ))}
        </div>
        <div className="flex w-[14px] flex-col items-center bg-[#eee]">
          <ScrollArrow />
          <div className="flex h-[61px] w-3 items-center justify-center rounded-[2px] border border-[#888] bg-linear-to-r from-[#f2f2f2] to-[#c6c6c6]">
            <span className="h-2 w-1.5 bg-[repeating-linear-gradient(#555_0_1px,transparent_1px_3px)]" />
          </div>
          <div className="flex-1" />
          <ScrollArrow rotate="rotate-180" />
        </div>
      </div>
      <button className="ml-2.5 flex h-3 w-3 items-center justify-center rounded-full border border-[#555] bg-white" aria-label="Picker menu">
        <svg width="4" height="6" viewBox="0 0 4 6" aria-hidden="true"><path d="M0 0l4 3-4 3z" /></svg>
      </button>
      <svg width="8" height="8" viewBox="0 0 8 8" className="absolute right-0.5 bottom-0.5" fill="#f4f4f4" aria-hidden="true">
        <path d="M6 0h2v2H6zM3 3h2v2H3zM6 3h2v2H6zM0 6h2v2H0zM3 6h2v2H3zM6 6h2v2H6z" />
      </svg>
    </div>
  );
}

function ConfirmDialog() {
  return (
    <div
      role="dialog"
      aria-label="Adobe Photoshop"
      className="absolute top-[280px] left-[444px] h-32 w-[390px] rounded-md border border-[#666] bg-white px-1.5 text-black"
    >
      <h2 className="h-7 pl-px text-[13px] leading-7">Adobe Photoshop</h2>
      <div className="flex h-[93px] border border-[#888] bg-[#f0f0f0]">
        <svg width="32" height="30" viewBox="0 0 32 30" className="mt-3 ml-2.5 shrink-0" aria-hidden="true">
          <path d="M16 3L30 27H2z" fill="#f5c518" stroke="#b8b8b8" strokeWidth="3" strokeLinejoin="round" />
          <path d="M16 4L29 26H3z" fill="#fbd40a" stroke="#d8a400" />
          <path d="M14 10h4l-1 9h-2zM14.500 21h3v3h-3z" fill="#222" />
        </svg>
        <div className="ml-3.5">
          <p className="mt-2 text-[12px] leading-5">是否用 拼贴 中的形状替换当前的形状？</p>
          <div className="mt-[31px] ml-[5px] flex gap-2.5">
            {['确定', '取消', '追加(A)'].map((label, i) => (
              <button
                key={label}
                className={`h-5 w-20 rounded-[3px] border bg-linear-to-b from-[#f2f2f2] from-50% to-[#d5d5d5] text-[12px] leading-[18px] ${
                  i === 0 ? 'border-[#3c7fb1] shadow-[inset_0_0_0_1px_#6fd0f5]' : 'border-[#707070]'
                }`}
              >
                {label}
              </button>
            ))}
          </div>
        </div>
      </div>
    </div>
  );
}

// Hand-drawn highlight around the append button, with an arrow to it
function Annotation() {
  return (
    <svg width="180" height="230" viewBox="655 345 180 230" className="pointer-events-none absolute top-[344px] left-[654px]" fill="none" stroke="#f00" strokeWidth="4" aria-hidden="true">
      <path d="M662 352h119v50H662z" />
      <path d="M822 570L748 389M746 410l2-21 17 14" strokeLinecap="round" />
    </svg>
  );
}

function Watermark() {
  return (
    <svg
      width="240"
      height="115"
      viewBox="980 840 240 115"
      className="pointer-events-none absolute right-[59px] bottom-[27px] drop-shadow-[0_0_1px_#999]"
      fill="#fff"
      fillOpacity="0.75"
      aria-hidden="true"
    >
      <text x="981" y="915" fontSize="50" fontWeight="bold" fontFamily="Liberation Sans, sans-serif">Bai</text>
      <ellipse cx="1069" cy="873" rx="8" ry="11" transform="rotate(-8 1069 873)" />
      <ellipse cx="1085" cy="857" rx="8" ry="12" />
      <ellipse cx="1106" cy="858" rx="8" ry="11" transform="rotate(10 1106 858)" />
      <ellipse cx="1118" cy="878" rx="8" ry="11" transform="rotate(10 1118 878)" />
      <path d="M1094 875q7 0 13 9 4 6 10 11 8 9 2 17-5 6-14 5-11-2-22 0-10 1-15-6-5-9 4-17 6-5 9-10 6-9 13-9z" />
      <text x="1075" y="911" fontSize="31" fontFamily="Liberation Sans, sans-serif" fontWeight="bold" fill="#eee" fillOpacity="1" stroke="#b0b0b0" strokeWidth="1.500">du</text>
      <text x="1129" y="912" fontSize="39" fontWeight="bold" fontFamily="Noto Sans CJK SC, sans-serif">经验</text>
      <text x="984" y="946" fontSize="26" fontFamily="Noto Sans, sans-serif">jingyan.baidu.com</text>
    </svg>
  );
}

export default function App() {
  return (
    <div className="relative flex h-screen flex-col overflow-hidden border-x border-t border-[#4a6a94] bg-[#d6d6d6] px-[3px] pb-0.5 font-['Noto_Sans','Noto_Sans_CJK_SC',sans-serif]">
      <TopBar />
      <nav className="flex h-[22px] shrink-0 items-center gap-[17px] pl-[9px] text-[12px] text-[#222]">
        {MENUS.map((menu) => (
          <button key={menu} className="whitespace-nowrap">{menu}</button>
        ))}
      </nav>
      <div className="flex min-h-0 flex-1 flex-col border border-[#4b4b4b]">
        <OptionsBar />
        <div className="flex min-h-0 flex-1">
          <Toolbar />
          <DocumentArea />
          <div className="flex w-[284px] shrink-0 flex-col border-l border-[#3c3c3c] bg-[#656565]">
            <div className="flex h-3 shrink-0 items-center justify-between bg-linear-to-b from-[#3c3c3c] to-[#565656] pr-0.5 pl-6">
              <Chevrons direction="left" />
              <Chevrons direction="right" />
            </div>
            <div className="flex min-h-0 flex-1">
              <IconDock />
              <div className="flex min-w-0 flex-1 flex-col">
                <ColorPanel />
                <MaskPanel />
                <LayersPanel />
              </div>
            </div>
          </div>
        </div>
      </div>
      <ShapePicker />
      <ConfirmDialog />
      <Annotation />
      <Watermark />
    </div>
  );
}
